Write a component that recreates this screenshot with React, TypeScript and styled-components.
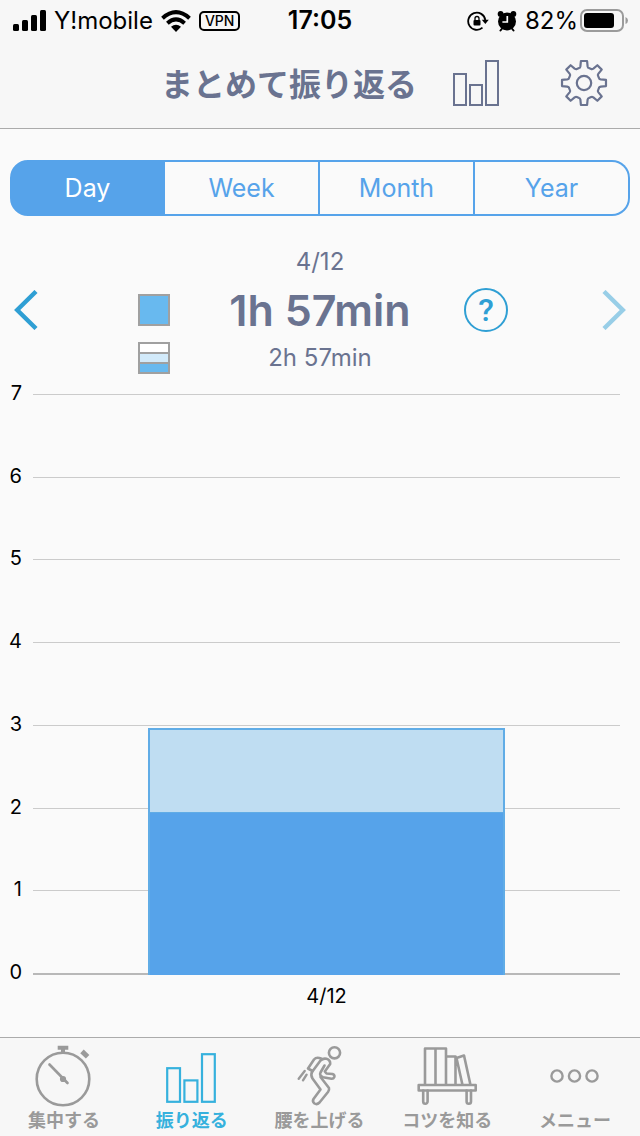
import React from "react";
import styled, { createGlobalStyle } from "styled-components";

const color = {
  page: "#fafafa",
  bar: "#f7f7f7",
  hairline: "#ababab",
  slate: "#6a7390",
  blue: "#56a3ea",
  accent: "#2f9fd4",
  active: "#36b1dd",
  muted: "#9a9a9a",
  light: "#bfddf2",
};

const GlobalStyle = createGlobalStyle`
  *, *::before, *::after { box-sizing: border-box; }
  body {
    margin: 0;
    background: ${color.page};
    font-family: Inter, "Noto Sans CJK JP", sans-serif;
    color: #000;
  }
  button { font: inherit; color: inherit; background: none; border: 0; padding: 0; cursor: pointer; }
  svg { display: block; }
`;

const Page = styled.div`
  display: flex;
  flex-direction: column;
  min-height: 100vh;
`;

const Top = styled.header`
  background: ${color.bar};
  border-bottom: 1px solid ${color.hairline};
`;

const StatusBar = styled.div`
  display: grid;
  grid-template-columns: 1fr auto 1fr;
  align-items: center;
  height: 41px;
  padding: 0 12px;
  font-size: 24px;
  line-height: 41px;
`;

const StatusGroup = styled.div<{ $end?: boolean }>`
  display: flex;
  align-items: center;
  gap: 8px;
  justify-content: ${(p) => (p.$end ? "flex-end" : "flex-start")};
`;

const Clock = styled.time`
  font-size: 25px;
  font-weight: 600;
`;

const Vpn = styled.span`
  height: 20px;
  padding: 0 4px;
  border: 2px solid #000;
  border-radius: 5px;
  font-size: 14px;
  font-weight: 500;
  line-height: 16px;
`;

const Battery = styled.span`
  display: flex;
  align-items: center;
  gap: 2px;
`;

const TitleBar = styled.div`
  display: flex;
  align-items: center;
  justify-content: flex-end;
  height: 87px;
  padding: 0 32px 0 16px;
`;

const Title = styled.h1`
  margin: 0 36px 0 0;
  color: ${color.slate};
  font-size: 32px;
  font-weight: 700;
  line-height: 40px;
  white-space: nowrap;
`;

const IconButton = styled.button`
  margin-bottom: 3px;
  && { color: ${color.slate}; }
  & + & { margin-left: 61px; }
`;

const Main = styled.main`
  display: flex;
  flex: 1;
  flex-direction: column;
`;

const Segments = styled.div`
  display: grid;
  grid-template-columns: repeat(4, 1fr);
  height: 56px;
  margin: 31px 10px 0;
`;

const Segment = styled.button<{ $active: boolean }>`
  && {
    border: 2px solid ${color.blue};
    border-left-width: 0;
    color: ${(p) => (p.$active ? "#fff" : color.blue)};
    background: ${(p) => (p.$active ? color.blue : "transparent")};
    font-size: 25px;
  }
  &&:first-child {
    border-left-width: 2px;
    border-radius: 18px 0 0 18px;
  }
  &&:last-child { border-radius: 0 18px 18px 0; }
`;

const Summary = styled.section`
  display: grid;
  grid-template-columns: 24px 1fr 288px 1fr 24px;
  grid-template-rows: 24px 72px 24px;
  align-items: center;
  justify-items: center;
  margin: 34px 14px 0;
  color: ${color.slate};
`;

const Small = styled.span`
  grid-column: 3;
  font-size: 24px;
  line-height: 24px;
`;

const Total = styled.strong`
  grid-column: 3;
  font-size: 43px;
  font-weight: 600;
  line-height: 48px;
`;

const Swatch = styled.span`
  grid-column: 2;
  justify-self: end;
  display: flex;
  flex-direction: column;
  gap: 2px;
  width: 32px;
  height: 32px;
  margin-right: 6px;
  padding: 2px;
  background: #a0a0a0;
`;

const SwatchFill = styled.span<{ $fill: string }>`
  flex: 1;
  background: ${(p) => p.$fill};
`;

const Help = styled.button`
  grid-column: 4;
  justify-self: start;
  width: 44px;
  height: 44px;
  && {
    border: 2px solid ${color.accent};
    border-radius: 50%;
    color: ${color.accent};
    font-family: Roboto, sans-serif;
    font-size: 32px;
    font-weight: 500;
    line-height: 40px;
  }
`;

const Arrow = styled.button<{ $column: number }>`
  grid-column: ${(p) => p.$column};
  grid-row: 2;
  && { color: ${color.accent}; }
  &:disabled { opacity: 0.48; }
`;

const Chart = styled.section`
  display: grid;
  grid-template: minmax(320px, 1fr) 24px / 12px 1fr;
  column-gap: 11px;
  flex: 1;
  margin: 11px 20px 29px 10px;
  font-size: 20px;
  line-height: 24px;
`;

const Scale = styled.div`
  display: flex;
  flex-direction: column;
  justify-content: space-between;
  align-items: flex-end;
`;

const Plot = styled.div`
  display: grid;
  grid-template: 1fr / 1fr;
  margin: 13px 0 9px;
`;

const Lines = styled.div`
  grid-area: 1 / 1;
  display: flex;
  flex-direction: column;
  border-bottom: 2px solid #b8b8b8;
`;

const Line = styled.div`
  flex: 1;
  border-top: 1px solid #cbcbcb;
`;

const Bars = styled.div`
  grid-area: 1 / 1;
  display: flex;
  align-items: flex-end;
  justify-content: center;
`;

const Bar = styled.div`
  display: flex;
  align-items: flex-end;
  box-sizing: content-box;
  width: 60%;
  border: 2px solid #60ace6;
  border-bottom: 0;
  background: ${color.light};
`;

const BarDone = styled.div`
  box-sizing: content-box;
  width: 100%;
  border-top: 1px solid #60ace6;
  background: ${color.blue};
`;

const XLabel = styled.span`
  grid-column: 2;
  text-align: center;
`;

const TabBar = styled.nav`
  display: flex;
  height: 99px;
  padding: 6px 1px 0 0;
  background: ${color.bar};
  border-top: 1px solid ${color.hairline};
`;

const Tab = styled.a<{ $active?: boolean }>`
  display: flex;
  flex: 1;
  flex-direction: column;
  align-items: center;
  color: ${(p) => (p.$active ? color.active : color.muted)};
  font-size: 18px;
  font-weight: 700;
  line-height: 24px;
  text-decoration: none;
  white-space: nowrap;
`;

const TabIcon = ({ children }: { children: React.ReactNode }) => (
  <svg width="64" height="65" viewBox="0 0 64 65" fill="none" stroke="currentColor" strokeWidth="2.6" strokeLinecap="round" strokeLinejoin="round" aria-hidden="true">
    {children}
  </svg>
);

const tabs = [
  {
    label: "集中する",
    icon: (
      <>
        <circle cx="31" cy="35" r="26.3" />
        <path d="M25.7 3.8h10.6M31 4v5" strokeWidth="4" strokeLinecap="butt" />
        <path d="M50 7.4l5.6 5.4" strokeWidth="5" strokeLinecap="butt" />
        <path d="M17.5 20.5L35.5 39" />
        <circle cx="31" cy="35" r="1.8" fill="currentColor" />
      </>
    ),
  },
  {
    label: "振り返る",
    icon: (
      <g strokeWidth="2.2" strokeLinejoin="miter">
        <rect x="7.2" y="24.2" width="12.8" height="33.6" />
        <rect x="24.4" y="36.4" width="13" height="21.4" />
        <rect x="42" y="10.2" width="12.8" height="47.6" />
      </g>
    ),
  },
  {
    label: "腰を上げる",
    icon: (
      <>
        <circle cx="47.5" cy="8.8" r="5.6" />
        <path d="M25 28L33.5 16.5Q36 14 39.5 14.8Q43.5 16 43.2 20L37.8 27.5L39.5 29.5L45.5 30Q48 31 47.3 33Q46.5 35 44.5 34.8L36 33.2Q32 31.5 33.5 28.5L37.5 21.5" />
        <path d="M33.5 33L42 44Q42.5 46 41 48L32.5 58.5Q30 61 27.5 59.5Q25 57.5 26.5 55L33.5 45.5L25.5 34.5Q23.5 31 25 28" />
        <path d="M25.5 27L21 24.5L27 15.5Q29.5 12.5 34 14.5" />
        <path d="M17.7 27L11.7 34.7M19.6 30.7L16 36.3" strokeWidth="2.4" />
      </>
    ),
  },
  {
    label: "コツを知る",
    icon: (
      <>
        <path d="M3.7 41h57v5.5h-57zM10 41V4.5h21V41M20.5 4.5V41M31 12.5h9.5V41M41.5 14l7.5-2.5L55.5 41M41.5 14L47.5 41" />
        <path d="M8.2 46.5v11a2.2 2.2 0 0 0 4.4 0V46.5M51.6 46.5v11a2.2 2.2 0 0 0 4.4 0V46.5" />
      </>
    ),
  },
  {
    label: "メニュー",
    icon: (
      <g strokeWidth="2.4">
        <circle cx="14" cy="32" r="5.6" />
        <circle cx="31.5" cy="32" r="5.6" />
        <circle cx="49" cy="32" r="5.6" />
      </g>
    ),
  },
];

const periods = ["Day", "Week", "Month", "Year"];
const hours = [7, 6, 5, 4, 3, 2, 1, 0];
const days = [{ label: "4/12", done: 117, planned: 177 }];
const maxMinutes = 420;

const gearPath = (() => {
  const pts: string[] = [];
  for (let i = 0; i < 8; i++) {
    const at = (r: number, deg: number) => {
      const a = ((i * 45 + deg - 90) * Math.PI) / 180;
      return `${(24 + r * Math.cos(a)).toFixed(2)} ${(24 + r * Math.sin(a)).toFixed(2)}`;
    };
    pts.push(
      `${i ? "L" : "M"}${at(17.2, -12)}L${at(22.2, -8)}L${at(22.2, 8)}L${at(17.2, 12)}Q${at(15.6, 14.5)} ${at(15.8, 18)}L${at(15.8, 27)}Q${at(15.6, 30.5)} ${at(17.2, 33)}`
    );
  }
  return pts.join("") + "Z";
})();

export default function App() {
  const [period, setPeriod] = React.useState("Day");
  return (
    <Page>
      <GlobalStyle />
      <Top>
        <StatusBar>
          <StatusGroup>
            <svg width="34" height="22" viewBox="0 0 34 22" aria-label="Signal">
              <rect x="1" y="14" width="6" height="7" rx="1.5" />
              <rect x="10" y="10" width="6" height="11" rx="1.5" />
              <rect x="19" y="5" width="6" height="16" rx="1.5" />
              <rect x="28" y="0" width="6" height="21" rx="1.5" />
            </svg>
            <span>Y!mobile</span>
            <svg width="30" height="22" viewBox="0 0 30 22" fill="none" stroke="#000" strokeWidth="4" aria-label="Wi-Fi">
              <path d="M1.5 8.2Q15-3.8 28.5 8.2M6.4 13.2Q15 5.6 23.6 13.2" />
              <path d="M15 22l-5-5.2Q15 12.8 20 16.8z" fill="#000" stroke="none" />
            </svg>
            <Vpn>VPN</Vpn>
          </StatusGroup>
          <Clock>17:05</Clock>
          <StatusGroup $end>
            <svg width="22" height="20" viewBox="0 0 22 20" fill="none" stroke="#000" strokeWidth="1.8" aria-label="Rotation lock">
              <path d="M15.5 16.7A8.6 8.6 0 1 1 18.3 9" />
              <path d="M14.8 8.8h7l-3.500 4.2z" fill="#000" stroke="none" />
              <rect x="6.5" y="9" width="7" height="5.6" rx="1" fill="#000" stroke="none" />
              <path d="M8 9V7.5a2 2 0 0 1 4 0V9" strokeWidth="1.3" />
            </svg>
            <svg width="20" height="22" viewBox="0 0 20 22" aria-label="Alarm">
              <circle cx="10" cy="11.5" r="9" />
              <circle cx="3.6" cy="4" r="2.9" />
              <circle cx="16.4" cy="4" r="2.9" />
              <path d="M3.5 20.5l2-2.5M16.5 20.5l-2-2.5" stroke="#000" strokeWidth="2" strokeLinecap="round" />
              <path d="M10.3 6v6H5.4" fill="none" stroke="#fff" strokeWidth="1.7" />
            </svg>
            <Battery>
              82%
              <svg width="48" height="24" viewBox="0 0 48 24" aria-label="Battery">
                <rect x="1" y="1" width="42" height="21" rx="6" fill="none" stroke="#9b9b9b" strokeWidth="2" />
                <rect x="4" y="4" width="30" height="15" rx="3" />
                <path d="M45.5 8v7q2.5-1 2.5-3.5T45.5 8" fill="#9b9b9b" />
              </svg>
            </Battery>
          </StatusGroup>
        </StatusBar>
        <TitleBar>
          <Title>まとめて振り返る</Title>
          <IconButton aria-label="Charts">
            <svg width="46" height="46" viewBox="0 0 46 46" fill="none" stroke="currentColor" strokeWidth="2">
              <rect x="1" y="14" width="12" height="31" />
              <rect x="17" y="25" width="12" height="20" />
              <rect x="33" y="1" width="12" height="44" />
            </svg>
          </IconButton>
          <IconButton aria-label="Settings">
            <svg width="48" height="48" viewBox="0 0 48 48" fill="none" stroke="currentColor" strokeWidth="2.2" strokeLinejoin="round">
              <path d={gearPath} />
              <circle cx="24" cy="24" r="7.2" />
            </svg>
          </IconButton>
        </TitleBar>
      </Top>
      <Main>
        <Segments>
          {periods.map((p) => (
            <Segment key={p} $active={p === period} aria-pressed={p === period} onClick={() => setPeriod(p)}>
              {p}
            </Segment>
          ))}
        </Segments>
        <Summary>
          <Small>4/12</Small>
          <Arrow $column={1} aria-label="Previous">
            <svg width="24" height="40" viewBox="0 0 24 40" fill="none" stroke="currentColor" strokeWidth="4.4">
              <path d="M22 1.5L3.2 20L22 38.5" />
            </svg>
          </Arrow>
          <Swatch>
            <SwatchFill $fill="#68b9ef" />
          </Swatch>
          <Total>1h 57min</Total>
          <Help aria-label="Help">?</Help>
          <Arrow $column={5} aria-label="Next" disabled>
            <svg width="24" height="40" viewBox="0 0 24 40" fill="none" stroke="currentColor" strokeWidth="4.4">
              <path d="M2 1.5L20.8 20L2 38.5" />
            </svg>
          </Arrow>
          <Swatch>
            <SwatchFill $fill="#fff" />
            <SwatchFill $fill="#d2eafa" />
            <SwatchFill $fill="#68b9ef" />
          </Swatch>
          <Small>2h 57min</Small>
        </Summary>
        <Chart>
          <Scale>
            {hours.map((h) => (
              <span key={h}>{h}</span>
            ))}
          </Scale>
          <Plot>
            <Lines>
              {hours.slice(1).map((h) => (
                <Line key={h} />
              ))}
            </Lines>
            <Bars>
              {days.map((d) => (
                <Bar key={d.label} style={{ height: `${(d.planned / maxMinutes) * 100}%` }}>
                  <BarDone style={{ height: `${(d.done / d.planned) * 100}%` }} />
                </Bar>
              ))}
            </Bars>
          </Plot>
          <XLabel>4/12</XLabel>
        </Chart>
      </Main>
      <TabBar>
        {tabs.map((t, i) => (
          <Tab key={t.label} href="#" $active={i === 1}>
            <TabIcon>{t.icon}</TabIcon>
            {t.label}
          </Tab>
        ))}
      </TabBar>
    </Page>
  );
}
